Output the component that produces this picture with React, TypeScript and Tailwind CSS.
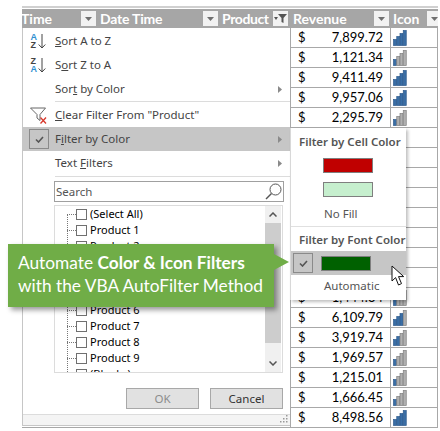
import React from "react";

const rows: [string, number][] = [
  ["7,899.72", 4], ["1,121.34", 1], ["9,411.49", 4], ["9,957.06", 4], ["2,295.79", 1],
  ["", 0], ["", 0], ["", 0], ["", 0], ["", 0], ["", 0], ["", 0], ["", 0],
  ["1,444.34", 1], ["6,109.79", 3], ["3,919.74", 2], ["1,969.57", 1], ["1,215.01", 1], ["1,666.45", 1], ["8,498.56", 4],
];

function Bars({ n }: { n: number }) {
  const hs = [6, 9, 12, 15];
  return (
    <svg width="14" height="16" viewBox="0 0 14 16" className="block">
      {hs.map((h, i) => (
        <rect key={i} x={0.5 + i * 3.25} y={15.5 - h} width="3" height={h}
          fill={i < n ? "#3a6ea5" : "#b0b0b0"} stroke={i < n ? "#2f5b8c" : "#7f7f7f"} strokeWidth="0.7" />
      ))}
    </svg>
  );
}

function Drop({ active }: { active?: boolean }) {
  return (
    <div className="flex h-[15px] w-[15px] shrink-0 items-center justify-center bg-[#f2f2f2]">
      {active ? (
        <svg width="13" height="11" viewBox="0 0 13 11">
          <path d="M0 4h4l-2 3z" fill="#555" />
          <path d="M4 1h9L9.5 5v5l-2-1V5z" fill="#555" />
        </svg>
      ) : (
        <svg width="7" height="4" viewBox="0 0 7 4"><path d="M0 0h7L3.5 4z" fill="#707070" /></svg>
      )}
    </div>
  );
}

function Arrow() {
  return <svg width="4" height="7" viewBox="0 0 4 7"><path d="M0 0l4 3.5L0 7z" fill="#8a8a8a" /></svg>;
}

function SortIcon({ top, bottom }: { top: string; bottom: string }) {
  return (
    <div className="flex w-[17px] items-center gap-[1px]">
      <div className="flex flex-col text-[9px] font-bold leading-[8px] [font-family:'Liberation_Sans',sans-serif]">
        <span className={top === "A" ? "text-[#2f8fd0]" : "text-[#444]"}>{top}</span>
        <span className={bottom === "A" ? "text-[#2f8fd0]" : "text-[#444]"}>{bottom}</span>
      </div>
      <svg width="8" height="15" viewBox="0 0 8 15" fill="none" stroke="#444" strokeWidth="1">
        <path d="M4 0v14M.7 10.5L4 14l3.3-3.5" />
      </svg>
    </div>
  );
}

function MenuItem({ icon, children, arrow, active }: { icon?: React.ReactNode; children: React.ReactNode; arrow?: boolean; active?: boolean }) {
  return (
    <div className={`flex h-6 shrink-0 items-center pr-[8px] ${active ? "bg-[#c6c6c6]" : ""}`}>
      <div className="flex h-6 w-[32px] shrink-0 items-center justify-center">{icon}</div>
      <span className="whitespace-nowrap">{children}</span>
      {arrow && <div className="ml-auto flex"><Arrow /></div>}
    </div>
  );
}

function TreeRow({ label }: { label: string }) {
  return (
    <div className="flex h-4 shrink-0 items-center">
      <div className="ml-[12px] w-[9px] border-t border-dotted border-[#777]" />
      <div className="h-[11px] w-[11px] shrink-0 border border-[#707070] bg-white" />
      <span className="ml-[3px] text-[11px] text-black">{label}</span>
    </div>
  );
}

function Check() {
  return (
    <div className="flex h-[20px] w-[20px] items-center justify-center border border-[#8a8a8a] bg-[#c6c6c6]">
      <svg width="9" height="7" viewBox="0 0 9 7" fill="none" stroke="#555" strokeWidth="1.6"><path d="M1 3.5L3.5 6L8 1" /></svg>
    </div>
  );
}

export default function App() {
  const ui = "[font-family:'Noto_Sans','Open_Sans',sans-serif]";
  return (
    <div className="relative h-[431px] w-[440px] overflow-hidden bg-white [font-family:'Lato',sans-serif]">
      {/* sheet */}
      <div className="ml-[22px] mt-[6px] w-[416px] border-t-2 border-[#d0d0d0]">
        <div className="mt-[1px] flex h-[19px] items-center overflow-hidden bg-[#a6a6a6] text-[14px] font-bold text-white">
          <span className="-ml-[1px] w-[60px] shrink-0">Time</span>
          <Drop />
          <span className="ml-[4px] w-[103px] shrink-0 tracking-[-0.2px]">Date Time</span>
          <Drop />
          <span className="ml-[4px] w-[51px] shrink-0 tracking-[-0.4px]">Product</span>
          <Drop active />
          <span className="ml-[5px] w-[81px] shrink-0">Revenue</span>
          <Drop />
          <span className="ml-[4px] w-[34px] shrink-0">Icon</span>
          <Drop />
        </div>
        {rows.map(([v, n], i) => (
          <div key={i} className="flex h-5 border-b border-[#a8a8a8]">
            <div className="w-[268px]" />
            <div className="flex w-[100px] items-center justify-between border-l border-[#a8a8a8] pl-[7px] pr-[7px] text-[13px] text-black">
              <span>{v ? "$" : ""}</span>
              <span>{v}</span>
            </div>
            <div className="flex w-[48px] items-center border-x border-[#a8a8a8] pl-[2px]">
              {n > 0 && <Bars n={n} />}
            </div>
          </div>
        ))}
      </div>

      {/* filter dropdown */}
      <div className={`absolute left-[22px] top-[28px] flex h-[398px] w-[268px] flex-col border-b border-l border-[#c6c6c6] bg-white pt-[1px] text-[11.5px] text-[#444] ${ui}`}>
        <MenuItem icon={<SortIcon top="A" bottom="Z" />}><u>S</u>ort A to Z</MenuItem>
        <MenuItem icon={<SortIcon top="Z" bottom="A" />}>S<u>o</u>rt Z to A</MenuItem>
        <MenuItem arrow>Sor<u>t</u> by Color</MenuItem>
        <div className="ml-[32px] h-px shrink-0 bg-[#dcdcdc]" />
        <div className="h-[1px] shrink-0" />
        <MenuItem icon={
          <svg width="18" height="17" viewBox="0 0 18 17" fill="none">
            <path d="M.5 1h15L10 7.5v6L7 11V7.5z" stroke="#666" />
            <path d="M10.5 10.5l5.5 6M16 10.5l-5.5 6" stroke="#d8382c" strokeWidth="1.3" />
          </svg>
        }><u>C</u>lear Filter From "Product"</MenuItem>
        <MenuItem active arrow icon={<Check />}>F<u>i</u>lter by Color</MenuItem>
        <MenuItem arrow>Text <u>F</u>ilters</MenuItem>
        <div className="ml-[32px] mt-[1px] h-px shrink-0 bg-[#dcdcdc]" />

        <div className="ml-[31px] mt-[4px] flex h-[21px] w-[230px] shrink-0 items-center justify-between border border-[#a0a0a0] pl-[1px] pr-[1px] text-[#555]">
          <span>Search</span>
          <svg width="17" height="17" viewBox="0 0 17 17" fill="none" stroke="#555">
            <circle cx="10.5" cy="6.5" r="5.5" />
            <path d="M6.5 10.5L1 16" strokeWidth="1.4" />
          </svg>
        </div>

        <div className="relative ml-[31px] mt-[3px] flex h-[168px] w-[229px] shrink-0 flex-col overflow-hidden border border-[#dcdcdc]">
          <div className="absolute bottom-0 left-[12px] top-[8px] border-l border-dotted border-[#777]" />
          <TreeRow label="(Select All)" />
          {[1, 2, 3, 4, 5, 6, 7, 8, 9].map((p) => <TreeRow key={p} label={`Product ${p}`} />)}
          <div className="h-[6px] shrink-0 overflow-hidden"><TreeRow label="(Blanks)" /></div>
          <div className="absolute right-[1px] top-0 flex h-full w-[16px] flex-col items-center bg-[#f0f0f0]">
            <div className="flex h-[17px] shrink-0 items-center justify-center">
              <svg width="8" height="5" viewBox="0 0 8 5" fill="none" stroke="#555" strokeWidth="1.5"><path d="M.5 4.5L4 1l3.5 3.5" /></svg>
            </div>
            <div className="h-[120px] w-full shrink-0 bg-[#cdcdcd]" />
            <div className="mt-auto flex h-[17px] shrink-0 items-center justify-center">
              <svg width="8" height="5" viewBox="0 0 8 5" fill="none" stroke="#555" strokeWidth="1.5"><path d="M.5.5L4 4l3.5-3.5" /></svg>
            </div>
          </div>
        </div>

        <div className="mt-[15px] flex shrink-0 justify-end gap-[11px] pr-[7px]">
          <div className="flex h-[21px] w-[73px] items-center justify-center border border-[#a8a8a8] bg-[#e1e1e1] text-[#8c8c8c]">OK</div>
          <div className="flex h-[21px] w-[73px] items-center justify-center border border-[#a8a8a8] bg-[#e1e1e1] text-[#333]">Cancel</div>
        </div>
        <div className="mt-[5px] flex flex-1 items-end justify-end border-t border-[#dcdcdc] bg-[#f4f4f4] pb-[2px] pr-[2px]">
          <svg width="8" height="8" viewBox="0 0 8 8" fill="#999"><rect x="6" y="0" width="1.5" height="1.5" /><rect x="3" y="3" width="1.5" height="1.5" /><rect x="6" y="3" width="1.5" height="1.5" /><rect x="0" y="6" width="1.5" height="1.5" /><rect x="3" y="6" width="1.5" height="1.5" /><rect x="6" y="6" width="1.5" height="1.5" /></svg>
        </div>
      </div>

      {/* color submenu */}
      <div className={`absolute left-[290px] top-[128px] flex h-[172px] w-[116px] flex-col border-l border-[#d8d8d8] bg-white text-[11.5px] text-[#555] shadow-[2px_2px_3px_rgba(0,0,0,0.25)] ${ui}`}>
        <div className="mt-[7px] flex h-[14px] shrink-0 items-center whitespace-nowrap pl-[8px] font-semibold">Filter by Cell Color</div>
        <div className="mt-[9px] h-[15px] w-[50px] shrink-0 self-center -translate-x-[1px] border border-[#7f7f7f] bg-[#c00000]" />
        <div className="mt-[9px] h-[15px] w-[50px] shrink-0 self-center -translate-x-[1px] border border-[#7f7f7f] bg-[#c6efce]" />
        <div className="mt-[8px] flex h-[17px] shrink-0 items-center pl-[33px]">No Fill</div>
        <div className="mt-[4px] h-px shrink-0 bg-[#e0e0e0]" />
        <div className="mt-[5px] flex h-[16px] shrink-0 items-center whitespace-nowrap pl-[8px] font-semibold">Filter by Font Color</div>
        <div className="mt-[3px] flex h-6 shrink-0 items-center bg-[#c6c6c6] pl-[2px]">
          <Check />
          <div className="ml-[8px] h-[15px] w-[50px] border border-[#7f7f7f] bg-[#006100]" />
        </div>
        <div className="mt-[3px] flex h-[16px] shrink-0 items-center pl-[33px]">Automatic</div>
      </div>

      {/* cursor */}
      <svg width="15" height="22" viewBox="0 0 15 22" className="absolute left-[391px] top-[265px]">
        <path d="M1 1v15l3.6-3.4L7.5 20l3-1.4-3-7h5.2z" fill="#fff" stroke="#111" strokeWidth="1" />
      </svg>

      {/* callout */}
      <div className="absolute left-[8px] top-[244px] flex h-[63px] w-[266px] flex-col justify-center bg-[#70ad47] pb-[4px] pl-[10px] text-[17.3px] leading-[23px] text-white shadow-[3px_3px_5px_rgba(0,0,0,0.4)]">
        <div>Automate <b>Color &amp; Icon Filters</b></div>
        <div>with the VBA AutoFilter Method</div>
        <svg width="15" height="16" viewBox="0 0 15 16" className="absolute left-[266px] top-[10px]">
          <path d="M0 0l15 8L0 16z" fill="#70ad47" />
        </svg>
      </div>
    </div>
  );
}
